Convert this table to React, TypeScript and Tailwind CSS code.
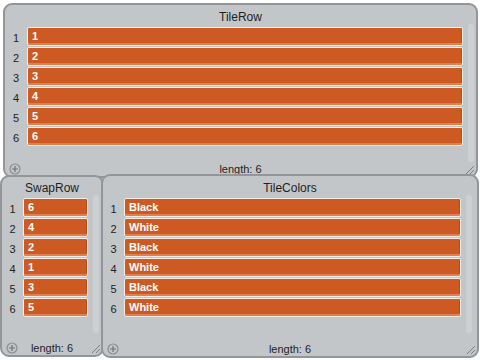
import React from "react";

type WatcherProps = {
  title: string;
  items: string[];
  className: string;
  indexW: string;
  cellW: string;
  titleH: string;
};

const PlusIcon = () => (
  <svg width="12" height="12" viewBox="0 0 12 12" className="shrink-0">
    <circle cx="6" cy="6" r="5" fill="none" stroke="#8b8e91" strokeWidth="1.2" />
    <path d="M6 3v6M3 6h6" stroke="#6f7275" strokeWidth="1.2" />
  </svg>
);

const ResizeHandle = () => (
  <svg width="12" height="12" viewBox="0 0 12 12" className="absolute right-[1px] bottom-[1px]">
    <path d="M11 3L3 11M11 7L7 11" stroke="#7d8083" strokeWidth="1" />
  </svg>
);

const Watcher = ({ title, items, className, indexW, cellW, titleH }: WatcherProps) => {
  return (
    <div
      className={`absolute flex flex-col rounded-[9px] border-2 border-[#939598] bg-[#c3c6c9] ${className}`}
    >
      <div className={`flex items-center justify-center text-[12px] text-[#1e1e1e] ${titleH}`}>
        {title}
      </div>
      <div className="flex">
        <div className="flex flex-col">
          {items.map((item, i) => (
            <div key={i} className="flex h-[20px] items-start">
              <div className={`pt-[3px] text-center text-[11px] text-[#222] ${indexW}`}>{i + 1}</div>
              <div
                className={`h-[19px] rounded-[2px] border border-[#f3ece7] bg-[#cc5a22] pl-[4px] text-[11px] leading-[16px] font-bold text-white shadow-[inset_0_-2px_0_#e0804f,inset_-1px_0_0_#b84d1b] ${cellW}`}
              >
                {item}
              </div>
            </div>
          ))}
        </div>
        <div className="ml-[5px] mt-[-3px] h-[138px] w-[6px] rounded-full bg-[#cdd0d2]" />
      </div>
      <div className="relative flex flex-1 items-end">
        <div className="absolute left-[4px] bottom-[1px]">
          <PlusIcon />
        </div>
        <div className="w-full text-center text-[11px] leading-[13px] text-[#1e1e1e]">length: 6</div>
      </div>
      <ResizeHandle />
    </div>
  );
};

export default function App() {
  return (
    <div
      className="relative h-[360px] w-[480px] overflow-hidden bg-white"
      style={{ fontFamily: '"Liberation Sans", Arial, sans-serif' }}
    >
      <Watcher
        title="TileRow"
        items={["1", "2", "3", "4", "5", "6"]}
        className="left-[3px] top-[3px] h-[175px] w-[475px] z-0"
        indexW="w-[22px]"
        cellW="w-[436px]"
        titleH="h-[22px] pt-[2px]"
      />
      <Watcher
        title="SwapRow"
        items={["6", "4", "2", "1", "3", "5"]}
        className="left-[0px] top-[175px] h-[182px] w-[104px] z-10"
        indexW="w-[21px]"
        cellW="w-[65px]"
        titleH="h-[21px] pt-[1px]"
      />
      <Watcher
        title="TileColors"
        items={["Black", "White", "Black", "White", "Black", "White"]}
        className="left-[101px] top-[174px] h-[184px] w-[378px] z-20"
        indexW="w-[21px]"
        cellW="w-[337px]"
        titleH="h-[22px] pt-[1px]"
      />
    </div>
  );
}
